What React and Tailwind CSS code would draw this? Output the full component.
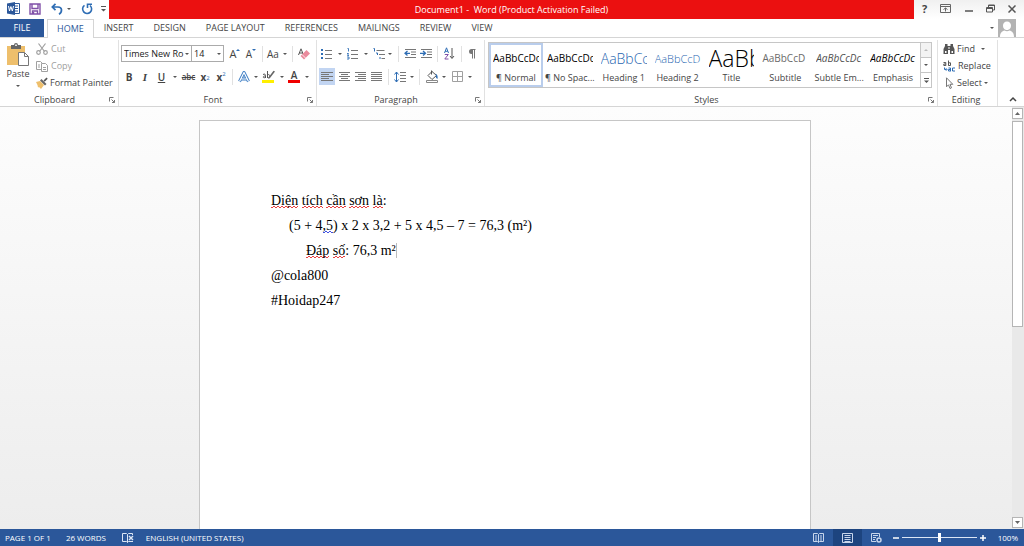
import { useState } from 'react';

const TABS = ['HOME', 'INSERT', 'DESIGN', 'PAGE LAYOUT', 'REFERENCES', 'MAILINGS', 'REVIEW', 'VIEW'];

const STYLES = [
    { name: '¶ Normal', sample: 'AaBbCcDc', look: 'text-[10px] text-black' },
    { name: '¶ No Spac...', sample: 'AaBbCcDc', look: 'text-[10px] text-black' },
    { name: 'Heading 1', sample: 'AaBbCc', look: 'text-[14px] font-light text-[#1f66b0]' },
    { name: 'Heading 2', sample: 'AaBbCcD', look: 'text-[11px] font-light text-[#1f66b0]' },
    { name: 'Title', sample: 'AaBb', look: 'text-[23px] font-light text-black' },
    { name: 'Subtitle', sample: 'AaBbCcD', look: 'text-[10px] text-[#6a6a6a]' },
    { name: 'Subtle Em...', sample: 'AaBbCcDc', look: 'text-[10px] italic text-[#505050]' },
    { name: 'Emphasis', sample: 'AaBbCcDc', look: 'text-[10px] italic text-black' },
];

export default function App() {
    const [tab, setTab] = useState('HOME');

    return (
        <div className="flex h-screen flex-col overflow-hidden bg-white font-['Open_Sans','Noto_Sans',sans-serif] text-[9px] leading-3 text-[#444]">
            <TitleBar />

            {/* Ribbon tabs */}
            <nav className="flex h-[19px] shrink-0 items-stretch border-b border-[#d5d5d5]">
                <button className="w-11 bg-[#2b579a] text-white">FILE</button>
                <div className="flex flex-1 pl-[3px]">
                    {TABS.map((name) => (
                        <button
                            key={name}
                            onClick={() => setTab(name)}
                            className={
                                name === tab
                                    ? '-mb-px border border-b-0 border-[#d5d5d5] bg-white px-[9px] text-[#2b579a]'
                                    : 'px-[10px]'
                            }
                        >
                            {name}
                        </button>
                    ))}
                </div>
                <div className="flex items-center gap-1 pr-2">
                    <Arrow />
                    <svg viewBox="0 0 18 18" className="size-[18px]">
                        <path d="M0 0h18v18H0z" fill="#b3b3b3" />
                        <path d="M9 2.500c2.500 0 4 1.800 4 4s-1.200 4.500-4 4.500-4-2.300-4-4.500 1.500-4 4-4zM2 18c0-4 2-6 4.500-6.500 1.500 1 3.500 1 5 0C14 12 16 14 16 18z" fill="#fff" />
                    </svg>
                </div>
            </nav>

            {/* Ribbon */}
            <div className="flex h-[69px] shrink-0 border-b border-[#d5d5d5] pt-[2px]">
                <ClipboardGroup />
                <FontGroup />
                <ParagraphGroup />
                <StylesGroup />
                <EditingGroup />
                <button aria-label="Collapse the ribbon" className="flex w-[26px] items-end justify-end pr-[7px] pb-1">
                    <svg viewBox="0 0 8 6" className="h-[6px] w-2" fill="none" stroke="#444" strokeWidth="1.500">
                        <path d="M1 5l3-3 3 3" />
                    </svg>
                </button>
            </div>

            <Workspace />
            <StatusBar />
        </div>
    );
}

function TitleBar() {
    return (
        <header className="flex h-[19px] shrink-0">
            <div className="flex w-[109px] items-center pb-[2px] pl-[7px]">
                <svg viewBox="0 0 13 13" className="size-[13px]">
                    <path d="M6 1.500h6.500v10H6z" fill="#fff" stroke="#2b579a" />
                    <path d="M8 4h3M8 6.500h3M8 9h3" stroke="#2b579a" />
                    <path d="M0 1.500L8 0v13L0 11.500z" fill="#2b579a" />
                    <path d="M1.500 4l1 5 1.400-4.500L5.300 9l1.200-5" fill="none" stroke="#fff" />
                </svg>
                <button aria-label="Save" className="ml-[9px]">
                    <svg viewBox="0 0 12 12" className="size-3" fill="none" stroke="#8050a8" strokeWidth="1.400">
                        <path d="M1 1h10v10H1zM3 1v4.500h6V1M3.500 11V8h5v3" />
                        <path d="M4.500 9v2" />
                    </svg>
                </button>
                <button aria-label="Undo" className="ml-[10px]">
                    <svg viewBox="0 0 12 12" className="size-3" fill="none" stroke="#2e6db4" strokeWidth="1.700">
                        <path d="M4.500 .8L1.300 4l3.200 3.200M1.500 4H7c4.500 0 4.500 5 1 7.200" />
                    </svg>
                </button>
                <Arrow className="ml-1" />
                <button aria-label="Repeat" className="ml-[10px]">
                    <svg viewBox="0 0 12 12" className="size-3" fill="none" stroke="#2e6db4" strokeWidth="1.600">
                        <path d="M3.500 2.300a4.500 4.500 0 1 0 5.500.2M6.500 5V1.300h4.500" />
                    </svg>
                </button>
                <button aria-label="Customize toolbar" className="ml-2">
                    <svg viewBox="0 0 5 6" className="h-[6px] w-[5px]" fill="#555">
                        <path d="M0 0h5v1H0zM0 3h5L2.500 5.500z" />
                    </svg>
                </button>
            </div>
            <h1 className="flex-1 bg-[#eb1010] text-center leading-[19px] whitespace-pre text-white">
                {'Document1 -  Word (Product Activation Failed)'}
            </h1>
            <div className="flex w-[110px] items-center justify-between bg-gradient-to-b from-[#f0f0f0] to-white pr-2 pb-[2px] pl-2">
                <button aria-label="Help" className="text-[11px] font-bold">?</button>
                <button aria-label="Ribbon display options">
                    <svg viewBox="0 0 11 9" className="h-[9px] w-[11px]" fill="none" stroke="#666">
                        <path d="M.5.5h10v8H.5zM.5 2.500h10M5.500 7.500V4M3.500 5.500l2-1.500 2 1.500" />
                    </svg>
                </button>
                <button aria-label="Minimize">
                    <svg viewBox="0 0 8 8" className="size-2" stroke="#555" strokeWidth="1.500"><path d="M0 6h8" /></svg>
                </button>
                <button aria-label="Restore">
                    <svg viewBox="0 0 9 9" className="size-[9px]" fill="none" stroke="#555">
                        <path d="M.5 3.500h6v4.500h-6zM.5 4.500h6M2.500 3V1h6v5H7M2.500 1.500h6" />
                    </svg>
                </button>
                <button aria-label="Close">
                    <svg viewBox="0 0 8 8" className="size-2" stroke="#555" strokeWidth="1.500"><path d="M.5.5l7 7M7.500.5l-7 7" /></svg>
                </button>
            </div>
        </header>
    );
}

// Titled ribbon section with a divider on its right
function Group({ title, launcher = true, className = '', children }) {
    return (
        <section className={`flex flex-col border-r border-[#e1e1e1] ${className}`}>
            <div className="min-h-0 flex-1">{children}</div>
            <footer className="flex h-3 items-center pr-[3px]">
                <h2 className="flex-1 text-center">{title}</h2>
                {launcher && (
                    <button aria-label={`${title} settings`}>
                        <svg viewBox="0 0 6 6" className="size-[6px]" fill="none" stroke="#777">
                            <path d="M.5 4.500v-4h4M2.500 2.500l3 3M5.500 3v2.500H3" />
                        </svg>
                    </button>
                )}
            </footer>
        </section>
    );
}

function Arrow({ className = '' }) {
    return (
        <svg viewBox="0 0 4 2" className={`h-[2px] w-1 shrink-0 ${className}`} fill="#555">
            <path d="M0 0h4L2 2z" />
        </svg>
    );
}

function Divider({ className = '' }) {
    return <span className={`h-4 w-px shrink-0 bg-[#e1e1e1] ${className}`} />;
}

function Tool({ label, className = 'w-4', children }) {
    return (
        <button aria-label={label} className={`flex h-[17px] shrink-0 items-center justify-center ${className}`}>
            {children}
        </button>
    );
}

function ClipboardGroup() {
    return (
        <Group title="Clipboard" className="w-[119px]">
            <div className="flex">
                <button className="flex w-9 flex-col items-center pt-[3px]">
                    <svg viewBox="0 0 22 23" className="h-[23px] w-[22px]">
                        <path d="M0 3h18v19H0z" fill="#eebf6c" />
                        <path d="M4 2h3a2 2 0 0 1 4 0h3v4H4z" fill="#666" />
                        <path d="M8.200 1.500h1.600v1.500H8.200z" fill="#fff" />
                        <path d="M11.500 9.500h6l4 4v9h-10z" fill="#fff" stroke="#777" />
                        <path d="M17.500 9.500v4h4" fill="none" stroke="#777" />
                    </svg>
                    <span className="mt-[2px]">Paste</span>
                    <Arrow className="mt-[5px]" />
                </button>
                <div className="flex flex-col items-start">
                    <button className="flex h-[17px] items-center gap-[3px] text-[#a0a0a0]">
                        <svg viewBox="0 0 12 12" className="size-3" fill="none" stroke="#a0a0a0" strokeWidth="1.200">
                            <path d="M2.500.5l6 8M9.500.5l-6 8" />
                            <circle cx="2.500" cy="9.500" r="1.800" />
                            <circle cx="9.500" cy="9.500" r="1.800" />
                        </svg>
                        Cut
                    </button>
                    <button className="flex h-[17px] items-center gap-[3px] text-[#a0a0a0]">
                        <svg viewBox="0 0 12 12" className="size-3" fill="#fff" stroke="#a0a0a0">
                            <path d="M.5 1.500h4l2 2v6h-6zM2 5h2M2 7h2" />
                            <path d="M5.500 3.500h4l2 2v6h-6zM7 7.500h3M7 9.500h3" />
                        </svg>
                        Copy
                    </button>
                    <button className="flex h-[17px] items-center gap-[2px]">
                        <svg viewBox="0 0 12 12" className="size-3">
                            <path d="M0 5l4-1 4 4-3 4-2-2-1 .5L1.500 8z" fill="#eebf6c" />
                            <path d="M4 3.500l1.500-1.500 5 5L9 8.500z" fill="#666" />
                            <path d="M7.500 3.500L10.500.5l1.200 1.200-3 3z" fill="#555" />
                        </svg>
                        Format Painter
                    </button>
                </div>
            </div>
        </Group>
    );
}

function Combo({ label, value, className }) {
    return (
        <div className={`flex h-[17px] items-center border border-[#ababab] pr-[2px] ${className}`}>
            <select aria-label={label} className="min-w-0 flex-1 appearance-none pl-[2px] text-[9px] text-[#222] outline-none">
                <option>{value}</option>
            </select>
            <Arrow />
        </div>
    );
}

function FontGroup() {
    return (
        <Group title="Font" className="w-[198px]">
            <div className="flex items-center pt-[5px] pl-[2px]">
                <Combo label="Font" value="Times New Ro" className="w-[71px]" />
                <Combo label="Font size" value="14" className="-ml-px w-[33px]" />
                <Tool label="Grow font" className="ml-[3px] w-4">
                    <span className="text-[11px]">A</span>
                    <svg viewBox="0 0 4 2" className="mb-2 h-[2px] w-1" fill="#2e6db4"><path d="M0 2h4L2 0z" /></svg>
                </Tool>
                <Tool label="Shrink font">
                    <span className="text-[10px]">A</span>
                    <svg viewBox="0 0 4 2" className="mb-2 h-[2px] w-1" fill="#2e6db4"><path d="M0 0h4L2 2z" /></svg>
                </Tool>
                <Divider className="ml-[3px]" />
                <Tool label="Change case" className="ml-[2px] w-[24px] gap-1">
                    <span className="text-[10px]">Aa</span>
                    <Arrow />
                </Tool>
                <Divider className="ml-[3px]" />
                <Tool label="Clear formatting" className="ml-[3px] w-4">
                    <svg viewBox="0 0 12 12" className="size-3">
                        <path d="M.5 7L3 .8 5.500 7M1.300 5h3.400" fill="none" stroke="#555" />
                        <path d="M8.500 2L12 5.500 6 11.500 2.500 8z" fill="#ea8a9c" />
                        <path d="M4 6.500L7.500 10" stroke="#fff" strokeWidth=".8" />
                    </svg>
                </Tool>
            </div>
            <div className="flex items-center pt-[6px] pl-[2px]">
                <Tool label="Bold"><b className="text-[10px]">B</b></Tool>
                <Tool label="Italic"><i className="font-['Liberation_Serif',serif] text-[11px] font-bold">I</i></Tool>
                <Tool label="Underline" className="w-[17px]"><span className="text-[10px] font-semibold underline">U</span></Tool>
                <Tool label="Underline styles" className="w-[10px]"><Arrow /></Tool>
                <Tool label="Strikethrough" className="w-[17px]"><span className="text-[8px] font-semibold line-through">abc</span></Tool>
                <Tool label="Subscript"><b className="text-[10px]">x</b><sub className="text-[6px] text-[#2e6db4]">2</sub></Tool>
                <Tool label="Superscript"><b className="text-[10px]">x</b><sup className="text-[6px] text-[#2e6db4]">2</sup></Tool>
                <Divider className="ml-[3px]" />
                <Tool label="Text effects" className="ml-[3px] w-4">
                    <svg viewBox="0 0 12 12" className="size-3" fill="none" strokeLinejoin="round">
                        <path d="M1.500 10.500L6 1.500l4.500 9M3.500 8h5" stroke="#3b7cc4" strokeWidth="3" />
                        <path d="M1.500 10.500L6 1.500l4.500 9M3.500 8h5" stroke="#fff" strokeWidth="1.200" />
                    </svg>
                </Tool>
                <Tool label="Text effect options" className="w-2"><Arrow /></Tool>
                <Tool label="Highlight" className="w-[18px]">
                    <svg viewBox="0 0 14 13" className="h-[13px] w-[14px]">
                        <path d="M0 10h12v3H0z" fill="#ffef00" />
                        <path d="M1 4.500c2-1 2.500 0 2.500 1v2.500M3.500 6C1 5.500 0 8.500 3.500 7.500M5.500 1v7M5.500 5c3-2 3 4 0 2.500" fill="none" stroke="#555" />
                        <path d="M13 1.500L8 8l-1.500 1 .3-2L11.500.8z" fill="#666" />
                    </svg>
                </Tool>
                <Tool label="Highlight colors" className="w-2"><Arrow /></Tool>
                <Tool label="Font color">
                    <span className="w-3 border-b-[3px] border-[#f00000] text-[10px] leading-[9px] font-semibold">A</span>
                </Tool>
                <Tool label="Font colors" className="w-[10px]"><Arrow /></Tool>
            </div>
        </Group>
    );
}

// Text lines drawn from x to x + width, one for each entry
function Lines({ rows }) {
    return (
        <svg viewBox="0 0 12 11" className="h-[11px] w-3" fill="#777">
            {rows.map(([x, width], i) => (
                <rect key={i} x={x} y={1 + i * 2} width={width} height="1" />
            ))}
        </svg>
    );
}

function ParagraphGroup() {
    return (
        <Group title="Paragraph" className="w-[168px]">
            <div className="flex items-center pt-[5px] pl-[2px]">
                <Tool label="Bullets">
                    <svg viewBox="0 0 12 12" className="size-3">
                        <path d="M0 1h2v2H0zM0 5h2v2H0zM0 9h2v2H0z" fill="#2e6db4" />
                        <path d="M4 2.500h7M4 6.500h7M4 10.500h7" stroke="#777" />
                    </svg>
                </Tool>
                <Tool label="Bullet styles" className="w-[9px]"><Arrow /></Tool>
                <Tool label="Numbering" className="w-[18px]">
                    <svg viewBox="0 0 12 12" className="size-3" fill="none">
                        <path d="M.5.5h1v3M0 5.500h1.500L.5 7.500h1.500M0 9h2v2H0" stroke="#2e6db4" strokeWidth=".9" />
                        <path d="M4 2.500h7M4 6.500h7M4 10.500h7" stroke="#777" />
                    </svg>
                </Tool>
                <Tool label="Number styles" className="w-[8px]"><Arrow /></Tool>
                <Tool label="Multilevel list" className="w-[18px]">
                    <svg viewBox="0 0 13 12" className="h-3 w-[13px]" fill="none">
                        <path d="M.5.5h1v3M3 5h1.500v2M7 9v2" stroke="#2e6db4" />
                        <path d="M3.500 2.500h8M6 6.500h6M8.500 10.500H12" stroke="#777" />
                    </svg>
                </Tool>
                <Tool label="List styles" className="w-[4px]"><Arrow /></Tool>
                <Divider className="ml-[6px]" />
                <Tool label="Decrease indent" className="ml-[2px] w-[17px]">
                    <svg viewBox="0 0 12 11" className="h-[11px] w-3" fill="none">
                        <path d="M1 1.500h11M7 4h5M7 6.500h5M1 9.500h11" stroke="#777" />
                        <path d="M6 5.300H1.500M3.500 3L1 5.300 3.500 7.600" stroke="#2e6db4" strokeWidth="1.300" />
                    </svg>
                </Tool>
                <Tool label="Increase indent">
                    <svg viewBox="0 0 12 11" className="h-[11px] w-3" fill="none">
                        <path d="M1 1.500h11M7 4h5M7 6.500h5M1 9.500h11" stroke="#777" />
                        <path d="M0 5.300h5M3 3l2.500 2.300L3 7.600" stroke="#2e6db4" strokeWidth="1.300" />
                    </svg>
                </Tool>
                <Divider className="ml-[3px]" />
                <Tool label="Sort" className="ml-[3px] w-4">
                    <svg viewBox="0 0 11 13" className="h-[13px] w-[11px]" fill="none">
                        <path d="M.5 6L2.500.8 4.500 6M1.200 4.300h2.600" stroke="#2e6db4" />
                        <path d="M.8 7.500h3.500L.8 12h3.700" stroke="#8050a8" />
                        <path d="M8 1v10M6 9l2 2.500L10 9" stroke="#555" />
                    </svg>
                </Tool>
                <Divider className="ml-[4px]" />
                <Tool label="Show marks" className="ml-[2px] w-4">
                    <svg viewBox="0 0 8 11" className="h-[11px] w-2">
                        <path d="M7.500 1H3.500a2.500 2.500 0 0 0 0 5H4v4.500h1V2h1v8.500h1V2h.5z" fill="#777" />
                    </svg>
                </Tool>
            </div>
            <div className="flex items-center pt-[6px] pl-[2px]">
                <Tool label="Align left" className="w-4 bg-[#c2d5f2]">
                    <Lines rows={[[0, 12], [0, 8], [0, 12], [0, 8], [0, 12]]} />
                </Tool>
                <Tool label="Center" className="w-[17px]"><Lines rows={[[1, 11], [3, 7], [1, 11], [3, 7], [1, 11]]} /></Tool>
                <Tool label="Align right"><Lines rows={[[1, 11], [4, 8], [1, 11], [4, 8], [1, 11]]} /></Tool>
                <Tool label="Justify"><Lines rows={[[1, 11], [1, 11], [1, 11], [1, 11], [1, 11]]} /></Tool>
                <Divider className="ml-[4px]" />
                <Tool label="Line spacing" className="ml-[3px] w-4">
                    <svg viewBox="0 0 12 12" className="size-3" fill="none">
                        <path d="M2.500 1v10M.5 3.500l2-2.500 2 2.500M.5 8.500l2 2.500 2-2.500" stroke="#2e6db4" />
                        <path d="M6 1.500h6M6 4.500h6M6 7.500h6M6 10.500h6" stroke="#777" />
                    </svg>
                </Tool>
                <Tool label="Line spacing options" className="w-[7px]"><Arrow /></Tool>
                <Divider className="ml-[4px]" />
                <Tool label="Shading" className="ml-[4px] w-4">
                    <svg viewBox="0 0 13 13" className="size-[13px]" fill="none">
                        <path d="M6 1.500l4.500 4L6 9.500l-4-4zM5.500.5v4" stroke="#555" strokeLinejoin="round" />
                        <path d="M9.500 3.500c2 1 2.500 3 2 5.500-1.500-1-2-2-1.500-4z" fill="#2e6db4" />
                        <path d="M.5 10.500h11v2H.5z" stroke="#888" fill="#fff" />
                    </svg>
                </Tool>
                <Tool label="Shading colors" className="w-2"><Arrow /></Tool>
                <Tool label="Borders" className="w-[18px]">
                    <svg viewBox="0 0 11 11" className="size-[11px]" fill="none" stroke="#a0a0a0">
                        <path d="M.5.5h10v10H.5zM5.500.5v10M.5 5.500h10" />
                    </svg>
                </Tool>
                <Tool label="Border styles" className="w-2"><Arrow /></Tool>
            </div>
        </Group>
    );
}

function StylesGroup() {
    return (
        <Group title="Styles" className="min-w-0 flex-1">
            <div className="mt-[2px] mr-[5px] ml-[3px] flex h-[46px] border border-[#c6c6c6]">
                <div className="grid min-w-0 flex-1 grid-cols-8">
                    {STYLES.map((style, i) => (
                        <button
                            key={style.name}
                            className={`flex min-w-0 flex-col items-center border-2 px-[2px] ${i === 0 ? 'border-[#b9cdec]' : 'border-transparent'}`}
                        >
                            <span className={`flex h-[27px] w-full items-center overflow-hidden leading-[27px] whitespace-nowrap ${style.look}`}>
                                {style.sample}
                            </span>
                            <span className="whitespace-nowrap">{style.name}</span>
                        </button>
                    ))}
                </div>
                <div className="flex w-[11px] flex-col divide-y divide-[#c6c6c6] border-l border-[#c6c6c6]">
                    <button aria-label="Previous styles" className="flex flex-1 items-center justify-center bg-[#f3f3f3]">
                        <svg viewBox="0 0 4 2" className="h-[2px] w-1" fill="#bbb"><path d="M0 2h4L2 0z" /></svg>
                    </button>
                    <button aria-label="Next styles" className="flex flex-1 items-center justify-center"><Arrow /></button>
                    <button aria-label="More styles" className="flex flex-1 items-center justify-center">
                        <svg viewBox="0 0 5 5" className="size-[5px]" fill="#555"><path d="M0 0h5v1H0zM0 2.500h5L2.500 5z" /></svg>
                    </button>
                </div>
            </div>
        </Group>
    );
}

function EditingGroup() {
    return (
        <Group title="Editing" launcher={false} className="w-[60px]">
            <div className="flex flex-col items-start pl-[5px]">
                <button className="flex h-[17px] items-center gap-[2px]">
                    <svg viewBox="0 0 12 12" className="size-3" fill="#555">
                        <path d="M2 1h2.500v2H7.500V1H10v2l1.500 3v5H7V7H5v4H.5V6L2 3z" />
                        <path d="M5.500 4h1v2h-1zM2 8h1.500v2H2zM8.500 8H10v2H8.500z" fill="#fff" />
                    </svg>
                    Find
                    <Arrow className="ml-1" />
                </button>
                <button className="flex h-[17px] items-center gap-[2px]">
                    <svg viewBox="0 0 13 12" className="h-3 w-[13px]" fill="none">
                        <path d="M.5 2.500h2.300v3.200M2.800 4H.8v1.500h2M5.500.5v5.200M5.500 2.800h2v2.700h-2" stroke="#555" />
                        <path d="M5.500 8h2v3.300M7.500 9.500h-2V11h2M12 8h-2.500v3H12M1.500 7.500v2h2M3 8.300l1 1.200-1 1.200" stroke="#2e6db4" />
                    </svg>
                    Replace
                </button>
                <button className="flex h-[17px] items-center gap-[2px]">
                    <svg viewBox="0 0 12 12" className="size-3" fill="#fff" stroke="#777">
                        <path d="M3.500.8v9l2-2 1.500 3.700 1.500-.7L7 7.300h2.800z" />
                    </svg>
                    Select
                    <Arrow />
                </button>
            </div>
        </Group>
    );
}

// Two rows of offset dashes make the proofing squiggle
const WAVE = 'bg-[length:4px_1px] bg-[position:0_100%,2px_calc(100%_-_1px)] bg-repeat-x';
const RED_WAVE = `${WAVE} bg-[linear-gradient(90deg,#e84040_2px,transparent_2px),linear-gradient(90deg,#e84040_2px,transparent_2px)]`;
const BLUE_WAVE = `${WAVE} bg-[linear-gradient(90deg,#4050e0_2px,transparent_2px),linear-gradient(90deg,#4050e0_2px,transparent_2px)]`;

function Workspace() {
    return (
        <div className="flex min-h-0 flex-1 bg-gradient-to-b from-[#fdfdfd] to-[#ededed]">
            <main className="flex min-w-0 flex-1 justify-center overflow-hidden pt-[13px] pr-[2px]">
                <article className="w-[612px] border border-b-0 border-[#c6c6c6] bg-white px-[71px] pt-[67px] font-['Liberation_Serif',serif] text-[14px] leading-[25px] text-black">
                    <p>
                        <span className={RED_WAVE}>Diện</span> <span className={RED_WAVE}>tích</span>{' '}
                        <span className={RED_WAVE}>cần</span> <span className={RED_WAVE}>sơn</span>{' '}
                        <span className={RED_WAVE}>là</span>:
                    </p>
                    <p className="pl-[18px]">
                        (5 + 4<span className={BLUE_WAVE}>,5</span>) x 2 x 3,2 + 5 x 4,5 – 7 = 76,3 (m²)
                    </p>
                    <p className="pl-[35px]">
                        <span className={RED_WAVE}>Đáp</span> <span className={RED_WAVE}>số</span>: 76,3 m²
                        <span className="border-r border-[#bbb]" />
                    </p>
                    <p>@cola800</p>
                    <p>#Hoidap247</p>
                </article>
            </main>

            {/* Vertical scroll bar */}
            <div className="flex w-3 flex-col bg-[#e9e9e9] py-px pr-px">
                <button aria-label="Scroll up" className="flex h-[11px] items-center justify-center border border-[#b5b5b5] bg-white">
                    <svg viewBox="0 0 5 3" className="h-[3px] w-[5px]" fill="#666"><path d="M0 3h5L2.500 0z" /></svg>
                </button>
                <div className="flex-1 pt-[2px]">
                    <div className="h-[52%] border border-[#b5b5b5] bg-white" />
                </div>
                <button aria-label="Scroll down" className="flex h-[11px] items-center justify-center border border-[#b5b5b5] bg-white">
                    <svg viewBox="0 0 5 3" className="h-[3px] w-[5px]" fill="#666"><path d="M0 0h5L2.500 3z" /></svg>
                </button>
            </div>
        </div>
    );
}

function StatusBar() {
    const [zoom, setZoom] = useState(100);

    return (
        <footer className="flex h-[17px] shrink-0 items-center bg-[#2b579a] pr-[6px] pl-[5px] text-[8px] text-white">
            <span>PAGE 1 OF 1</span>
            <span className="ml-[15px]">26 WORDS</span>
            <button aria-label="Proofing" className="ml-4">
                <svg viewBox="0 0 12 10" className="h-[10px] w-3" fill="none" stroke="#dce6f5">
                    <path d="M5.500 1.500L4.500.5h-4v8h4l1 1zM5.500 1.500l1-1h4V2M5.500 9.500l1-1h4.500" />
                    <path d="M7 3l4 4M11 3L7 7" strokeWidth="1.400" />
                </svg>
            </button>
            <span className="ml-3">ENGLISH (UNITED STATES)</span>

            <div className="ml-auto flex h-full items-center">
                <button aria-label="Read mode" className="px-[9px]">
                    <svg viewBox="0 0 11 10" className="h-[10px] w-[11px]" fill="none" stroke="#c8d6ec">
                        <path d="M5.500 1.500L4.500.5h-4v8h4l1 1 1-1h4v-8h-4zM5.500 1.500v8M2 3h2M2 5h2M2 7h2M7 3h2M7 5h2M7 7h2" />
                    </svg>
                </button>
                <button aria-label="Print layout" className="h-full bg-[#1d447f] px-[9px]">
                    <svg viewBox="0 0 11 10" className="h-[10px] w-[11px]" fill="none" stroke="#c8d6ec">
                        <path d="M.5.5h10v9H.5zM2.500 2.500h6M2.500 4.500h6M2.500 6.500h6M2.500 8.500h6" />
                    </svg>
                </button>
                <button aria-label="Web layout" className="pr-2 pl-[9px]">
                    <svg viewBox="0 0 11 10" className="h-[10px] w-[11px]" fill="none" stroke="#c8d6ec">
                        <path d="M5 8.500H.5v-8h8V4M2 2.500h5M2 4.500h3M2 6.500h2" />
                        <circle cx="8" cy="7" r="2" strokeWidth="1.500" />
                    </svg>
                </button>
                <button aria-label="Zoom out" className="px-[3px]">
                    <svg viewBox="0 0 6 6" className="size-[6px]" stroke="#fff" strokeWidth="1.500"><path d="M0 3h6" /></svg>
                </button>
                <input
                    type="range"
                    aria-label="Zoom"
                    min="10"
                    max="190"
                    value={zoom}
                    onChange={(e) => setZoom(Number(e.target.value))}
                    className="h-[9px] w-[75px] appearance-none bg-[linear-gradient(#dce6f5,#dce6f5)] bg-[length:100%_1px] bg-center bg-no-repeat [&::-webkit-slider-thumb]:h-[9px] [&::-webkit-slider-thumb]:w-[3px] [&::-webkit-slider-thumb]:appearance-none [&::-webkit-slider-thumb]:bg-white"
                />
                <button aria-label="Zoom in" className="px-[3px]">
                    <svg viewBox="0 0 6 6" className="size-[6px]" stroke="#fff" strokeWidth="1.500"><path d="M0 3h6M3 0v6" /></svg>
                </button>
                <span className="ml-[9px]">{zoom}%</span>
            </div>
        </footer>
    );
}
